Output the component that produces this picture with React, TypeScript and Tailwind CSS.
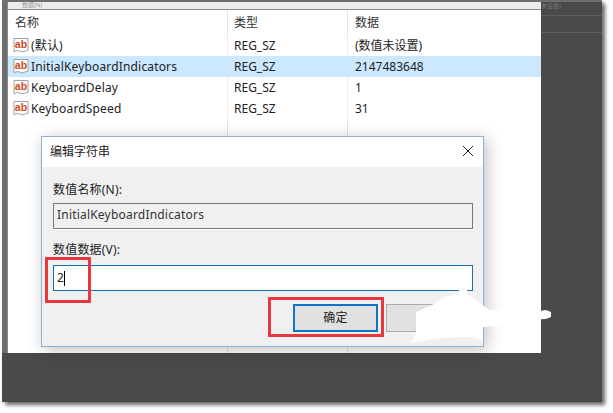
const CJK = { fontFamily: '"Noto Sans", "Noto Sans CJK SC", sans-serif' }

function RegIcon() {
  return (
    <svg width="16" height="17" viewBox="0 0 16 17" className="shrink-0">
      <path d="M1 1.5H15V13.5C13 12.2 11.5 16 8 14.5C5.5 13.5 3.5 13 1 15Z" fill="#fdfdfd" stroke="#a2a2a2" strokeWidth="1" />
      <text x="8" y="11" textAnchor="middle" fontSize="10.5" fontWeight="700" fill="#cf4a22" fontFamily="Liberation Sans, sans-serif">ab</text>
    </svg>
  )
}

const rows = [
  { name: '(默认)', type: 'REG_SZ', data: '(数值未设置)' },
  { name: 'InitialKeyboardIndicators', type: 'REG_SZ', data: '2147483648', active: true },
  { name: 'KeyboardDelay', type: 'REG_SZ', data: '1' },
  { name: 'KeyboardSpeed', type: 'REG_SZ', data: '31' },
]

function Dialog() {
  return (
    <div className="absolute left-[41px] top-[136px] w-[443px] h-[211px] border border-[#8fb0cc] bg-[#f0f0f0] shadow-[3px_3px_16px_rgba(0,0,0,0.25)]">
      <div className="h-[30px] bg-white flex items-center justify-between pl-[8px] pr-[9px] text-[12px] text-[#222]">
        <span>编辑字符串</span>
        <svg width="12" height="12" viewBox="0 0 12 12" className="-mt-[2px]"><path d="M1 1L11 11M11 1L1 11" stroke="#222" strokeWidth="1" fill="none" /></svg>
      </div>
      <div className="pl-[11px] pr-[10px] pt-[14px] text-[12px] text-[#222] tracking-[0.2px]">
        <div className="h-[17px] leading-[17px]">数值名称(N):</div>
        <div className="mt-[5px] h-[26px] border border-[#7a7a7a] pl-[3px] leading-[22px] text-[#333] shadow-[0_1px_0_#fff]">InitialKeyboardIndicators</div>
        <div className="mt-[12px] h-[17px] leading-[17px]">数值数据(V):</div>
        <div className="mt-[7px] h-[26px] border border-[#1a70b8] bg-white pl-[3px] flex items-center">
          <span>2</span><span className="w-px h-[15px] bg-black" />
        </div>
        <div className="mt-[13px] flex justify-end gap-[8px] pr-[2px]">
          <button className="w-[85px] h-[28px] border-2 border-[#0f74c8] bg-[#e1e1e1] text-[12px] text-[#222]">确定</button>
          <button className="w-[85px] h-[28px] border border-[#adadad] bg-[#e1e1e1] text-[12px] text-[#222]">取消</button>
        </div>
      </div>
    </div>
  )
}

export default function App() {
  return (
    <div className="relative w-[613px] h-[413px] bg-white overflow-hidden" style={CJK}>
      <div className="ml-[2px] w-[600px] h-[402px] bg-[#4a4a4a] shadow-[3px_3px_4px_rgba(0,0,0,0.6)] flex flex-col">
        <div className="h-[2px] bg-[#6e6e6e]" />
        <div className="flex h-[351px]">
          <div className="w-[5px] bg-[#6e6e6e]" />
          <div className="w-[534px] flex flex-col bg-white border-l border-[#8a8a8a]">
            <div className="h-[7px] bg-[#ececec] text-[6px] leading-[7px] text-[#999] pl-[14px]">数据(N)</div>
            <div className="flex-1 flex flex-col border-t-[1px] border-[#8a8a8a] bg-white">
              <div className="grid grid-cols-[220px_120px_1fr] h-[25px] text-[12px] text-[#333] leading-[25px]">
                <div className="pl-[7px] border-r border-[#e5e5e5]">名称</div>
                <div className="pl-[6px] border-r border-[#e5e5e5]">类型</div>
                <div className="pl-[7px]">数据</div>
              </div>
              {rows.map((r) => (
                <div key={r.name} className={`grid grid-cols-[220px_120px_1fr] h-[21px] text-[12px] text-[#222] leading-[21px] ${r.active ? 'bg-[#cce8ff]' : ''}`}>
                  <div className={`pl-[5px] flex items-center gap-[2px] ${r.active ? '' : 'border-r border-[#f0f0f0]'}`}>
                    <RegIcon />
                    <span className="tracking-[0.16px]">{r.name}</span>
                  </div>
                  <div className={`pl-[6px] ${r.active ? '' : 'border-r border-[#f0f0f0]'}`}>{r.type}</div>
                  <div className="pl-[7px]">{r.data}</div>
                </div>
              ))}
              <div className="flex-1 grid grid-cols-[220px_120px_1fr]">
                <div className="border-r border-[#e5e5e5]" />
                <div className="border-r border-[#e5e5e5]" />
                <div />
              </div>
            </div>
          </div>
          <div className="flex-1 flex flex-col">
            <div className="h-[14px] border-b border-[#5e5e5e] text-[6px] leading-[8px] text-[#777]">未设置)</div>
            <div className="h-[17px] border-b border-[#5e5e5e]" />
          </div>
        </div>
      </div>

      <Dialog />

      {/* red annotation boxes */}
      <div className="absolute left-[45px] top-[257px] w-[46px] h-[46px] border-[3px] border-[#e8383d]" />
      <div className="absolute left-[268px] top-[297px] w-[116px] h-[40px] border-[3px] border-[#e8383d]" />

      {/* white scribble */}
      <svg className="absolute left-[405px] top-[285px]" width="155" height="65" viewBox="405 285 155 65">
        <path d="M411 343L416 333L416 312L432 305L445 297L459 294L459 289L467 289L467 294L478 302L490 310L540 311L546 310L551 312L551 317L546 319L525 320L510 325L483 327L483 340L470 337L440 338Z" fill="#fff" />
      </svg>
    </div>
  )
}
